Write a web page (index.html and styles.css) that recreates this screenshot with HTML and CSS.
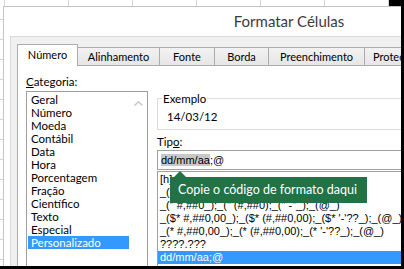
FILE: index.html
```html
<!doctype html>
<html lang="pt-BR">

<head>
    <meta charset="UTF-8">
    <title>Formatar Células</title>
    <link rel="stylesheet" href="styles.css">
</head>

<body>
    <div class="dialog">
        <div class="dialog-title">Formatar Células</div>
        <div class="dialog-body">
            <ul class="tabs">
                <li class="tab active">Número</li>
                <li class="tab tab-wide">Alinhamento</li>
                <li class="tab tab-fonte">Fonte</li>
                <li class="tab tab-borda">Borda</li>
                <li class="tab tab-fill">Preenchimento</li>
                <li class="tab tab-prot">Proteção</li>
            </ul>
            <div class="tab-panel">
                <div class="col-left">
                    <div class="field-label"><u>C</u>ategoria:</div>
                    <div class="listbox categories">
                        <ul class="list-items">
                            <li>Geral</li>
                            <li>Número</li>
                            <li>Moeda</li>
                            <li>Contábil</li>
                            <li>Data</li>
                            <li>Hora</li>
                            <li>Porcentagem</li>
                            <li>Fração</li>
                            <li>Científico</li>
                            <li>Texto</li>
                            <li>Especial</li>
                            <li class="selected">Personalizado</li>
                        </ul>
                        <div class="scrollbar">
                            <svg class="arrow-up" width="9" height="5" viewBox="0 0 9 5">
                                <polyline points="0.5,4.5 4.5,0.8 8.5,4.5" fill="none" stroke="#c2c2c2" stroke-width="1.3"/>
                            </svg>
                        </div>
                    </div>
                </div>

                <div class="col-right">
                    <div class="sample">
                        <span class="sample-legend">Exemplo</span>
                        <div class="sample-value">14/03/12</div>
                    </div>
                    <div class="field-label type-label">Tip<u>o</u>:</div>
                    <div class="textbox"><span class="text-sel">dd/mm/aa</span>;@</div>
                    <div class="format-wrap">
                        <ul class="listbox formats">
                            <li>[h]:mm:ss</li>
                            <li>_(* #,##0_);_(* (#,##0);_(* "-"_);_(@_)</li>
                            <li>_(" #,##0_);_(" (#,##0);_(" -"_);_(@_)</li>
                            <li>_($* #,##0,00_);_($* (#,##0,00);_($* '-'??_);_(@_)</li>
                            <li>_(* #,##0,00_);_(* (#,##0,00);_(* '-'??_);_(@_)</li>
                            <li>????.???</li>
                            <li class="selected">dd/mm/aa;@</li>
                            <li>[$-F800]dddd, mmmm dd, aaaa</li>
                        </ul>
                        <div class="tooltip">Copie o código de formato daqui</div>
                    </div>
                </div>
            </div>
        </div>
    </div>
    <div class="frame"></div>
</body>

</html>
```

FILE: styles.css
```css
*,
*:after,
*:before {
    box-sizing: border-box;
    padding: 0;
    margin: 0;
}

html,
body {
    width: 404px;
    height: 269px;
    overflow: hidden;
}

/* planilha do Excel por trás da janela */
body {
    font-family: "Segoe UI", Lato, "Open Sans", sans-serif;
    font-size: 11.5px;
    color: #000;
    background-color: #fff;
    background-image:
        linear-gradient(to right, #d4d4d4 1px, transparent 1px),
        linear-gradient(to bottom, #d4d4d4 1px, transparent 1px);
    background-size: 64px 20px, 64px 20px;
    background-position: 4px 0, 0 -1px;
}

ul {
    list-style: none;
}

.dialog {
    width: 572px;
    height: 300px;
    margin: 6px 0 0 3px;
    background: #fff;
    border: 1px solid #c4c4c4;
}

.dialog-title {
    height: 29px;
    line-height: 29px;
    text-align: center;
    font-size: 15px;
    color: #3b3b3b;
}

.dialog-body {
    margin-left: 6px;
    height: 280px;
    background: #f0f0f0;
    border-top: 1px solid #dadada;
    border-left: 1px solid #dadada;
    padding: 7px 0 0 6px;
}

/* abas */
.tabs {
    display: flex;
    align-items: flex-end;
    height: 21px;
}

.tab {
    height: 18px;
    line-height: 17px;
    margin-left: -1px;
    text-align: center;
    font-size: 11px;
    border: 1px solid #acacac;
    border-bottom: none;
    background: linear-gradient(#f2f2f2, #e6e6e6);
    flex: none;
}

.tab.active {
    position: relative;
    z-index: 1;
    width: 61px;
    height: 22px;
    line-height: 20px;
    margin: 0 0 -1px 0;
    background: #fff;
}

.tab-wide {
    width: 83px;
}

.tab-fonte {
    width: 56px;
}

.tab-borda {
    width: 55px;
}

.tab-fill {
    width: 97px;
}

.tab-prot {
    width: 70px;
    text-align: left;
    padding-left: 8px;
}

.tab-panel {
    display: flex;
    height: 240px;
    background: #fff;
    border-top: 1px solid #acacac;
    border-left: 1px solid #acacac;
    padding: 8px 0 0 8px;
}

.col-left {
    width: 122px;
    flex: none;
}

.col-right {
    width: 420px;
    flex: none;
    margin-left: 9px;
}

.field-label {
    height: 15px;
    line-height: 15px;
}

.listbox {
    border: 1px solid #a0a0a0;
    background: #fff;
}

.categories {
    display: flex;
    margin-top: 2px;
    height: 190px;
}

.list-items {
    width: 103px;
    padding: 1px;
}

.list-items li {
    height: 13px;
    line-height: 13px;
    padding-left: 3px;
    white-space: nowrap;
}

.selected {
    background: #3399ff;
    color: #fff;
}

.scrollbar {
    width: 17px;
    text-align: center;
}

.arrow-up {
    display: block;
    margin: 9px auto 0;
}

/* grupo Exemplo */
.sample {
    position: relative;
    height: 32px;
    margin-top: 24px;
    border: 1px solid #dcdcdc;
}

.sample-legend {
    position: absolute;
    top: -8px;
    left: 4px;
    padding: 0 1px;
    line-height: 15px;
    background: #fff;
}

.sample-value {
    padding: 10px 0 0 9px;
    line-height: 15px;
}

.type-label {
    margin-top: 4px;
}

.textbox {
    height: 20px;
    margin-top: 1px;
    padding-left: 3px;
    border: 1px solid #a0a0a0;
    font: 11px/18px "Liberation Sans", Arial, sans-serif;
}

.text-sel {
    background: #c8c8c8;
}

.format-wrap {
    position: relative;
    margin-top: 1px;
}

.formats {
    height: 110px;
    padding-top: 1px;
    font: 11px "Liberation Sans", Arial, sans-serif;
}

.formats li {
    height: 13px;
    line-height: 13px;
    padding-left: 2px;
    white-space: nowrap;
}

/* dica verde sobre a lista */
.tooltip {
    position: absolute;
    top: 6px;
    left: 13px;
    width: 197px;
    height: 26px;
    padding-left: 8px;
    line-height: 26px;
    font-size: 12.5px;
    color: #fff;
    background: #217346;
    white-space: nowrap;
}

.tooltip:before {
    content: "";
    position: absolute;
    top: -6px;
    left: 4px;
    border-left: 6px solid transparent;
    border-right: 6px solid transparent;
    border-bottom: 6px solid #217346;
}

/* moldura preta da captura */
.frame {
    position: fixed;
    top: 0;
    left: 0;
    width: 404px;
    height: 269px;
    border-right: 3px solid #000;
    border-bottom: 3px solid #000;
    pointer-events: none;
}

.frame:before {
    content: "";
    position: absolute;
    top: 0;
    right: 0;
    width: 12px;
    height: 6px;
    background: #000;
}
```
